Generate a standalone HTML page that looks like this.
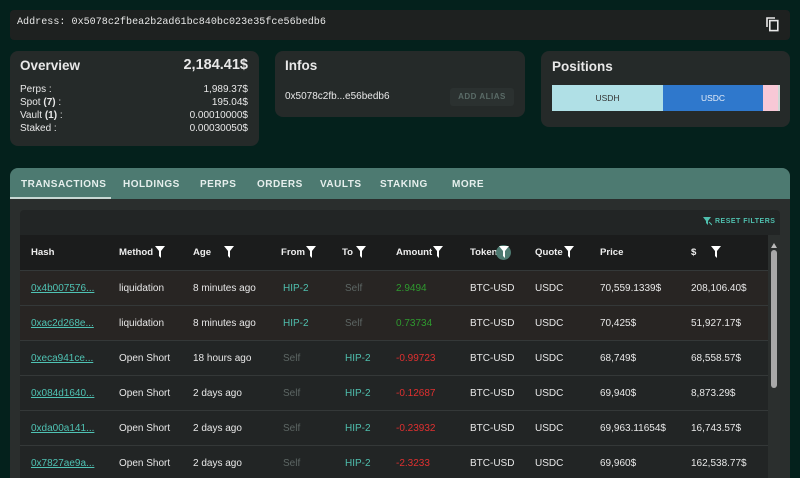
<!DOCTYPE html><html><head><style>
*{box-sizing:border-box;margin:0;padding:0}
html,body{width:800px;height:478px;overflow:hidden}
body{background:#04211c;font-family:"Liberation Sans",sans-serif;color:#e8e8e8;position:relative}
.card{position:absolute;background:#252a29;border-radius:8px}
.mono{font-family:"Liberation Mono",monospace}
.abs{position:absolute}
.tab{position:absolute;top:179px;font-size:10px;font-weight:bold;letter-spacing:0.5px;color:#e6efed}
.th{position:absolute;top:247px;font-size:9.6px;font-weight:bold;color:#eee}
.row{position:absolute;left:20px;width:748px;height:35px;border-top:1px solid #343838;font-size:10px}
.row span{position:absolute;top:12px}
.h{color:#4fc3b4;text-decoration:underline}
.g{color:#4fbfae}.s{color:#5d6664}.r{color:#e03030}.gr{color:#2f9a2f}
svg.f{position:absolute;top:246px}
</style></head><body>
<div class="card" style="left:10px;top:10px;width:780px;height:30px;background:#1e2120;border-radius:4px"></div>
<div class="abs mono" style="left:17px;top:17px;font-size:10.1px;color:#e6e6e6">Address: 0x5078c2fbea2b2ad61bc840bc023e35fce56bedb6</div>
<svg class="abs" style="left:765px;top:16px" width="15" height="16" viewBox="0 0 15 16"><path d="M2 11V2h8" fill="none" stroke="#e8e8e8" stroke-width="1.6"/><rect x="4.8" y="4.6" width="8" height="10" fill="none" stroke="#e8e8e8" stroke-width="1.6"/></svg>

<div class="card" style="left:10px;top:51px;width:249px;height:95px"></div>
<div class="abs" style="left:20px;top:58px;font-size:13.5px;font-weight:bold">Overview</div>
<div class="abs" style="left:150px;top:57px;width:98px;text-align:right;font-size:14.5px;font-weight:bold">2,184.41$</div>
<div class="abs" style="left:20px;top:83px;font-size:10px;line-height:13px">Perps :<br>Spot <b>(7)</b> :<br>Vault <b>(1)</b> :<br>Staked :</div>
<div class="abs" style="left:150px;top:83px;width:98px;text-align:right;font-size:10px;line-height:13px">1,989.37$<br>195.04$<br>0.00010000$<br>0.00030050$</div>

<div class="card" style="left:275px;top:51px;width:250px;height:66px"></div>
<div class="abs" style="left:285px;top:58px;font-size:13.5px;font-weight:bold">Infos</div>
<div class="abs" style="left:285px;top:91px;font-size:10px">0x5078c2fb...e56bedb6</div>
<div class="abs" style="left:450px;top:88px;width:64px;height:18px;background:#2b3130;border-radius:3px;font-size:8px;font-weight:bold;color:#5a6b67;text-align:center;line-height:18px;letter-spacing:0.5px">ADD ALIAS</div>

<div class="card" style="left:541px;top:51px;width:249px;height:76px"></div>
<div class="abs" style="left:552px;top:59px;font-size:13.5px;font-weight:bold">Positions</div>
<div class="abs" style="left:552px;top:85px;width:111px;height:26px;background:#b0e0e6;color:#333;font-size:8.5px;text-align:center;line-height:26px">USDH</div>
<div class="abs" style="left:663px;top:85px;width:100px;height:26px;background:#2f78cc;color:#e8eef8;font-size:8.5px;text-align:center;line-height:26px">USDC</div>
<div class="abs" style="left:763px;top:85px;width:15px;height:26px;background:#f8c8d6"></div>
<div class="abs" style="left:778px;top:85px;width:2px;height:26px;background:#cfd8d6"></div>

<div class="card" style="left:10px;top:168px;width:780px;height:310px;background:#2a2e2d;border-radius:8px 8px 0 0"></div>
<div class="abs" style="left:10px;top:168px;width:780px;height:31px;background:#4d7a71;border-radius:8px 8px 0 0"></div>
<div class="abs" style="left:10px;top:197px;width:101px;height:2px;background:#c8d8d4"></div>
<div class="tab" style="left:21px">TRANSACTIONS</div>
<div class="tab" style="left:123px">HOLDINGS</div>
<div class="tab" style="left:200px">PERPS</div>
<div class="tab" style="left:257px">ORDERS</div>
<div class="tab" style="left:320px">VAULTS</div>
<div class="tab" style="left:380px">STAKING</div>
<div class="tab" style="left:452px">MORE</div>

<div class="abs" style="left:20px;top:210px;width:760px;height:268px;background:#222525;border-radius:4px 4px 0 0"></div>
<svg class="abs" style="left:703px;top:217px" width="9" height="9" viewBox="0 0 9 9"><path d="M0 0h8L5 4v4L3 6V4z" fill="#4fbfae"/><path d="M6 5l3 3" stroke="#4fbfae"/></svg>
<div class="abs" style="left:715px;top:218px;font-size:7px;font-weight:bold;color:#4fbfae;letter-spacing:0.5px">RESET FILTERS</div>
<div class="abs" style="left:20px;top:235px;width:748px;height:35px;background:#1b1c1c"></div>
<div class="th" style="left:31px">Hash</div>
<div class="th" style="left:119px">Method</div>
<div class="th" style="left:193px">Age</div>
<div class="th" style="left:281px">From</div>
<div class="th" style="left:342px">To</div>
<div class="th" style="left:396px">Amount</div>
<div class="th" style="left:470px">Token</div>
<div class="th" style="left:535px">Quote</div>
<div class="th" style="left:600px">Price</div>
<div class="th" style="left:691px">$</div>
<div class="abs" style="left:496px;top:245px;width:15px;height:15px;border-radius:50%;background:#4d7a71"></div>
<svg width="0" height="0" style="position:absolute"><defs><symbol id="fi" viewBox="0 0 10 12"><path d="M0 0h10L6 5v7L4 10V5z" fill="#fff"/></symbol></defs></svg>
<svg class="f" style="left:155px" width="10" height="12"><use href="#fi"/></svg>
<svg class="f" style="left:224px" width="10" height="12"><use href="#fi"/></svg>
<svg class="f" style="left:306px" width="10" height="12"><use href="#fi"/></svg>
<svg class="f" style="left:356px" width="10" height="12"><use href="#fi"/></svg>
<svg class="f" style="left:433px" width="10" height="12"><use href="#fi"/></svg>
<svg class="f" style="left:499px" width="10" height="12"><use href="#fi"/></svg>
<svg class="f" style="left:564px" width="10" height="12"><use href="#fi"/></svg>
<svg class="f" style="left:711px" width="10" height="12"><use href="#fi"/></svg>

<div class="row" style="top:270px;background:#282523"><span class="h" style="left:11px">0x4b007576...</span><span style="left:99px">liquidation</span><span style="left:173px">8 minutes ago</span><span class="g" style="left:263px">HIP-2</span><span class="s" style="left:325px">Self</span><span class="gr" style="left:376px">2.9494</span><span style="left:450px">BTC-USD</span><span style="left:515px">USDC</span><span style="left:580px">70,559.1339$</span><span style="left:671px">208,106.40$</span></div>
<div class="row" style="top:305px;background:#282523"><span class="h" style="left:11px">0xac2d268e...</span><span style="left:99px">liquidation</span><span style="left:173px">8 minutes ago</span><span class="g" style="left:263px">HIP-2</span><span class="s" style="left:325px">Self</span><span class="gr" style="left:376px">0.73734</span><span style="left:450px">BTC-USD</span><span style="left:515px">USDC</span><span style="left:580px">70,425$</span><span style="left:671px">51,927.17$</span></div>
<div class="row" style="top:340px"><span class="h" style="left:11px">0xeca941ce...</span><span style="left:99px">Open Short</span><span style="left:173px">18 hours ago</span><span class="s" style="left:263px">Self</span><span class="g" style="left:325px">HIP-2</span><span class="r" style="left:376px">-0.99723</span><span style="left:450px">BTC-USD</span><span style="left:515px">USDC</span><span style="left:580px">68,749$</span><span style="left:671px">68,558.57$</span></div>
<div class="row" style="top:375px"><span class="h" style="left:11px">0x084d1640...</span><span style="left:99px">Open Short</span><span style="left:173px">2 days ago</span><span class="s" style="left:263px">Self</span><span class="g" style="left:325px">HIP-2</span><span class="r" style="left:376px">-0.12687</span><span style="left:450px">BTC-USD</span><span style="left:515px">USDC</span><span style="left:580px">69,940$</span><span style="left:671px">8,873.29$</span></div>
<div class="row" style="top:410px"><span class="h" style="left:11px">0xda00a141...</span><span style="left:99px">Open Short</span><span style="left:173px">2 days ago</span><span class="s" style="left:263px">Self</span><span class="g" style="left:325px">HIP-2</span><span class="r" style="left:376px">-0.23932</span><span style="left:450px">BTC-USD</span><span style="left:515px">USDC</span><span style="left:580px">69,963.11654$</span><span style="left:671px">16,743.57$</span></div>
<div class="row" style="top:445px"><span class="h" style="left:11px">0x7827ae9a...</span><span style="left:99px">Open Short</span><span style="left:173px">2 days ago</span><span class="s" style="left:263px">Self</span><span class="g" style="left:325px">HIP-2</span><span class="r" style="left:376px">-2.3233</span><span style="left:450px">BTC-USD</span><span style="left:515px">USDC</span><span style="left:580px">69,960$</span><span style="left:671px">162,538.77$</span></div>

<div class="abs" style="left:768px;top:235px;width:12px;height:243px;background:#2b2f2e"></div>
<div class="abs" style="left:771px;top:243px;width:0;height:0;border-left:3.5px solid transparent;border-right:3.5px solid transparent;border-bottom:5px solid #bbb"></div>
<div class="abs" style="left:771px;top:250px;width:6px;height:138px;background:#a8a8a8;border-radius:3px"></div>
</body></html>
